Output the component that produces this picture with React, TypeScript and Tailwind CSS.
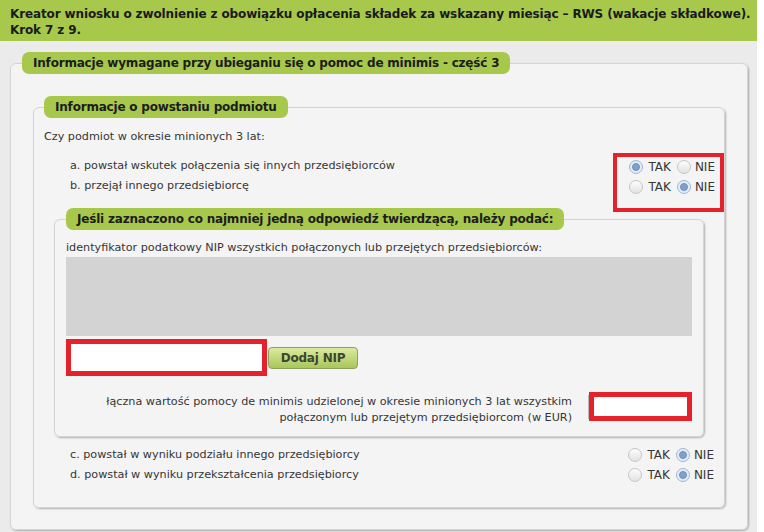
import React from 'react'

const font = { fontFamily: '"DejaVu Sans", Verdana, sans-serif' }

function Radio({ checked }: { checked: boolean }): React.ReactNode {
  return (
    <span
      className={
        'inline-flex items-center justify-center w-[14px] h-[14px] rounded-full border ' +
        (checked
          ? 'border-[#a3b7d5] bg-[#e4ecf6]'
          : 'border-[#c6c6c6] bg-gradient-to-b from-[#fdfdfd] to-[#e2e2e2]')
      }
    >
      {checked && <span className="w-[8px] h-[8px] rounded-full bg-[#819fcd] border border-[#7090c0]" />}
    </span>
  )
}

function YesNo({ value }: { value: 'TAK' | 'NIE' }): React.ReactNode {
  return (
    <div className="flex items-center h-[20px] text-[12px]">
      <Radio checked={value === 'TAK'} />
      <span className="ml-[5px] mr-[6px]">TAK</span>
      <Radio checked={value === 'NIE'} />
      <span className="ml-[4px]">NIE</span>
    </div>
  )
}

const legendClass =
  'h-[22px] flex items-center px-[11px] rounded-[7px] bg-[#a8c84c] font-bold text-[12px] tracking-[-0.2px] text-[#1c1c1c]'

const fieldsetClass =
  'border border-[#d4d4d4] rounded-[6px] bg-[#f4f4f4] shadow-[1px_1px_2px_rgba(0,0,0,0.28)]'

export default function App(): React.ReactNode {
  return (
    <div className="w-[764px] h-[532px] overflow-hidden bg-white" style={font}>
      <div className="w-[757px] h-[532px] bg-[#ebebeb]">
        <div className="h-[41px] bg-[#a8c84c] px-[10px] pt-[6px] text-[12px] leading-[16px] font-bold tracking-[-0.12px] whitespace-nowrap text-[#1a1a1a]">
          Kreator wniosku o zwolnienie z obowiązku opłacenia składek za wskazany miesiąc – RWS (wakacje składkowe).
          <br />
          Krok 7 z 9.
        </div>

        <div className="px-[10px] pt-[11px]">
          <fieldset className={fieldsetClass + ' w-[738px]'}>
            <legend className={legendClass + ' ml-[11px]'}>
              Informacje wymagane przy ubieganiu się o pomoc de minimis - część 3
            </legend>

            <div className="px-[22px] pt-[22px] pb-[21px]">
              <fieldset className={fieldsetClass + ' text-[11.2px] text-[#363636]'}>
                <legend className={legendClass + ' ml-[10px]'}>Informacje o powstaniu podmiotu</legend>

                <div className="px-[10px] pb-[22px]">
                  <div className="mt-[9px] leading-[20px]">Czy podmiot w okresie minionych 3 lat:</div>

                  <div className="mt-[6px] flex justify-between items-start">
                    <div className="pl-[26px] pt-[3px] leading-[20px]">
                      <div>a. powstał wskutek połączenia się innych przedsiębiorców</div>
                      <div>b. przejął innego przedsiębiorcę</div>
                    </div>
                    <div className="border-[4px] border-[#e3222c] pl-[12px] pr-[5px] pb-[11px] -mr-[10px] -mb-[4px]">
                      <YesNo value="TAK" />
                      <YesNo value="NIE" />
                    </div>
                  </div>

                  <fieldset className={fieldsetClass + ' mx-[10px]'}>
                    <legend className={legendClass + ' ml-[11px]'}>
                      Jeśli zaznaczono co najmniej jedną odpowiedź twierdzącą, należy podać:
                    </legend>

                    <div className="px-[11px] pb-[10px]">
                      <div className="mt-[9px] leading-[18px]">
                        identyfikator podatkowy NIP wszystkich połączonych lub przejętych przedsiębiorców:
                      </div>
                      <div className="h-[79px] bg-[#d3d3d3]" />

                      <div className="mt-[3px] flex items-center">
                        <div className="border-[5px] border-[#e3222c] w-[201px] h-[37px]">
                          <div className="w-full h-full bg-white" />
                        </div>
                        <button
                          type="button"
                          className="ml-[1px] w-[90px] h-[22px] rounded-[4px] border border-[#8e9f63] bg-gradient-to-b from-[#dcea9f] to-[#a9c65a] font-bold text-[12px] tracking-[-0.2px] text-[#3c4530]"
                        >
                          Dodaj NIP
                        </button>
                      </div>

                      <div className="mt-[16px] flex justify-end items-start">
                        <div className="mt-[2px] text-right leading-[16px]">
                          łączna wartość pomocy de minimis udzielonej w okresie minionych 3 lat wszystkim
                          <br />
                          połączonym lub przejętym przedsiębiorcom (w EUR)
                        </div>
                        <div className="ml-[16px] flex items-center">
                          <div className="w-[1px] h-[24px] bg-[#b8b8b8]" />
                          <div className="border-[5px] border-[#e3222c] w-[103px] h-[29px]">
                            <div className="w-full h-full bg-white" />
                          </div>
                        </div>
                      </div>
                    </div>
                  </fieldset>

                  <div className="mt-[8px] flex justify-between items-start leading-[20px]">
                    <div className="pl-[26px]">
                      <div>c. powstał w wyniku podziału innego przedsiębiorcy</div>
                      <div>d. powstał w wyniku przekształcenia przedsiębiorcy</div>
                    </div>
                    <div>
                      <YesNo value="NIE" />
                      <YesNo value="NIE" />
                    </div>
                  </div>
                </div>
              </fieldset>
            </div>
          </fieldset>
        </div>
      </div>
    </div>
  )
}
